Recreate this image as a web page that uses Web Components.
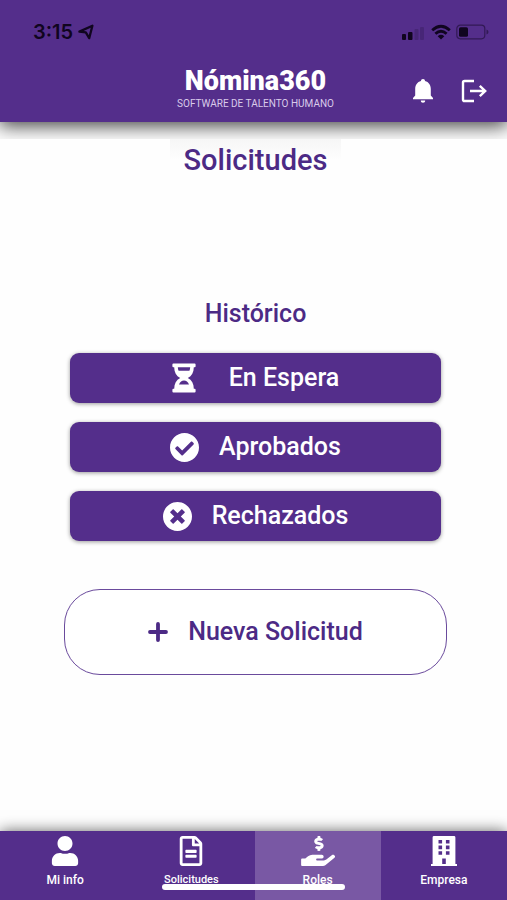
<!DOCTYPE html>
<html lang="es">
<head>
<meta charset="utf-8">
<meta name="viewport" content="width=device-width, initial-scale=1">
<title>Nómina360 – Solicitudes</title>
<style>
  body { margin: 0; font-family: Roboto, "Liberation Sans", sans-serif; background: #fefefe; --brand: #542e8b; }
</style>
</head>
<body>
<nomina-app></nomina-app>
<script>
const ICONS = {
  location: ['0 0 16 16', '<path d="M1.400 7.600 14.400 1.800 11.200 14.200 7.800 8.400Z" fill="none" stroke="currentColor" stroke-width="2.300" stroke-linejoin="round"/>'],
  signal: ['0 0 24 16', '<rect x="0" y="10" width="4" height="6" rx="1"/><rect x="6" y="8" width="4.500" height="8" rx="1"/><g opacity=".18"><rect x="12.500" y="5" width="4" height="11" rx="1"/><rect x="18" y="3" width="4" height="13" rx="1"/></g>'],
  wifi: ['0 0 20 16', '<g fill="none" stroke="currentColor" stroke-width="2.8"><path d="M1.2 6.2Q10-1.8 18.8 6.2"/><path d="M4.4 9.8Q10 4.6 15.6 9.8"/></g><path d="M6.7 12.2Q10 9.5 13.3 12.2L10 15.6Z"/>'],
  battery: ['0 0 33 16', '<rect x=".8" y="1.2" width="28" height="13.6" rx="3.5" fill="none" stroke="currentColor" stroke-width="1.2" opacity=".5"/><rect x="3" y="3.2" width="9" height="9.6" rx="1.6"/><path d="M30.5 5.5q2 .7 2 2.5t-2 2.5z" opacity=".5"/>'],
  bell: ['0 0 22 26', '<path d="M11 1c1.3 0 2 .8 2 2 3.8 1 5.8 4 5.8 8v6.6l2.2 2.3v1.3H1v-1.3l2.2-2.3V11c0-4 2-7 5.8-8 0-1.2.7-2 2-2zM8.8 22.6h4.4c0 1.4-.9 2.2-2.2 2.2s-2.2-.8-2.2-2.2z"/>'],
  logout: ['0 0 26 24', '<path d="M13 2H3.6Q2 2 2 3.6v16.8Q2 22 3.6 22H13M9 12h15M18.8 6.8 24.2 12l-5.4 5.2" fill="none" stroke="currentColor" stroke-width="2.4"/>'],
  hourglass: ['0 0 24 30', '<path fill-rule="evenodd" d="M1.4.4h21.2q1 0 1 1v1.8q0 1-1 1h-.8c0 5-2 8.700-6 10.800 4 2.100 6 5.800 6 10.800h.8q1 0 1 1v1.800q0 1-1 1H1.400q-1 0-1-1v-1.800q0-1 1-1h.8c0-5 2-8.700 6-10.800-4-2.100-6-5.800-6-10.800h-.8q-1 0-1-1V1.400q0-1 1-1zM5.800 4.200q.1 2 .8 3.600h10.800q.7-1.600.8-3.600zM7 21.600h10c-1-2.700-2.800-4-5-4s-4 1.300-5 4z"/>'],
  check: ['8 8 496 496', '<path d="M504 256c0 136.967-111.033 248-248 248S8 392.967 8 256 119.033 8 256 8s248 111.033 248 248zM227.314 387.314l184-184c6.248-6.248 6.248-16.379 0-22.627l-22.627-22.627c-6.248-6.249-16.379-6.249-22.628 0L216 308.118l-70.059-70.059c-6.248-6.248-16.379-6.248-22.628 0l-22.627 22.627c-6.248 6.248-6.248 16.379 0 22.627l104 104c6.249 6.249 16.379 6.249 22.628.001z"/>'],
  cross: ['8 8 496 496', '<path d="M256 8C119 8 8 119 8 256s111 248 248 248 248-111 248-248S393 8 256 8zm121.600 313.100c4.700 4.700 4.700 12.300 0 17L338 377.600c-4.700 4.700-12.300 4.700-17 0L256 312l-65.100 65.600c-4.700 4.700-12.300 4.700-17 0L134.400 338c-4.700-4.700-4.700-12.300 0-17l65.600-65-65.600-65.100c-4.700-4.700-4.700-12.300 0-17l39.600-39.600c4.700-4.700 12.300-4.700 17 0l65 65.700 65.100-65.600c4.700-4.700 12.300-4.700 17 0l39.600 39.600c4.700 4.700 4.700 12.300 0 17L312 256l65.600 65.100z"/>'],
  plus: ['0 0 20 20', '<path d="M10 2v16M2 10h16" fill="none" stroke="currentColor" stroke-width="3.800" stroke-linecap="round"/>'],
  user: ['0 0 448 512', '<path d="M224 256c70.700 0 128-57.300 128-128S294.700 0 224 0 96 57.300 96 128s57.300 128 128 128zm89.600 32h-16.700c-22.200 10.200-46.900 16-72.900 16s-50.600-5.800-72.900-16h-16.700C60.200 288 0 348.200 0 422.400V464c0 26.500 21.500 48 48 48h352c26.500 0 48-21.500 48-48v-41.600c0-74.200-60.200-134.400-134.400-134.400z"/>'],
  file: ['0 0 384 512', '<path d="M288 248v28c0 6.600-5.400 12-12 12H108c-6.600 0-12-5.400-12-12v-28c0-6.600 5.400-12 12-12h168c6.600 0 12 5.400 12 12zm-12 72H108c-6.600 0-12 5.400-12 12v28c0 6.600 5.400 12 12 12h168c6.600 0 12-5.400 12-12v-28c0-6.600-5.400-12-12-12zm108-188.100V464c0 26.500-21.500 48-48 48H48c-26.500 0-48-21.500-48-48V48C0 21.500 21.500 0 48 0h204.100C264.800 0 277 5.100 286 14.100L369.900 98c9 8.900 14.100 21.200 14.100 33.900zm-128-80V128h76.100L256 51.900zM336 464V176H232c-13.300 0-24-10.700-24-24V48H48v416h288z"/>'],
  hand: ['0 0 576 512', '<path d="M271.06,144.3l54.27,14.3a8.59,8.59,0,0,1,6.63,8.1c0,4.6-4.09,8.4-9.12,8.4h-35.6a30,30,0,0,1-11.19-2.2c-5.24-2.2-11.28-1.7-15.3,2l-19,17.5a11.68,11.68,0,0,0-2.25,2.66,11.42,11.42,0,0,0,3.88,15.74,83.77,83.77,0,0,0,34.51,11.5V240c0,8.8,7.83,16,17.37,16h17.37c9.55,0,17.38-7.2,17.38-16V222.4c32.93-3.6,57.84-31,53.5-63-3.15-23-22.46-41.3-46.56-47.7L282.68,97.4a8.59,8.59,0,0,1-6.63-8.1c0-4.6,4.09-8.4,9.12-8.4h35.6A30,30,0,0,1,332,83.1c5.23,2.2,11.28,1.7,15.3-2l19-17.5A11.31,11.31,0,0,0,368.47,61a11.43,11.43,0,0,0-3.84-15.78,83.82,83.82,0,0,0-34.52-11.5V16c0-8.8-7.82-16-17.37-16H295.37C285.82,0,278,7.2,278,16V33.6c-32.89,3.6-57.85,31-53.51,63C227.63,119.6,247,137.9,271.06,144.3ZM565.27,328.1c-11.8-10.7-30.2-10-42.6,0L430.27,402a63.64,63.64,0,0,1-40,14H272a16,16,0,0,1,0-32h78.29c15.9,0,30.71-10.9,33.25-26.6a31.2,31.2,0,0,0,.46-5.46A32,32,0,0,0,352,320H192a117.66,117.66,0,0,0-74.1,26.29L71.4,384H16A16,16,0,0,0,0,400v96a16,16,0,0,0,16,16H372.77a64,64,0,0,0,40-14L564,377a32,32,0,0,0,1.28-48.9Z"/>'],
  building: ['0 0 26 30', '<path fill-rule="evenodd" d="M3 0h20q1.400 0 1.400 1.400V28H26v2H0v-2h1.600V1.400Q1.600 0 3 0zM7.500 4v3.600h3.600V4zm7.400 0v3.600h3.600V4zm-7.400 5.600v3.600h3.600V9.600zm7.400 0v3.600h3.600V9.600zm-7.400 5.600v3.600h3.600v-3.600zm7.400 0v3.600h3.600v-3.600zM11.200 22.400V28h3.600v-5.600z"/>']
};

class BaseElement extends HTMLElement {
  constructor() {
    super();
    this.attachShadow({ mode: 'open' });
  }
  connectedCallback() { this.shadowRoot.innerHTML = this.view(); }
}

customElements.define('app-icon', class extends BaseElement {
  view() {
    const [box, shapes] = ICONS[this.getAttribute('name')];
    return `<style>:host{display:block;flex:none}svg{display:block;width:100%;height:100%}</style>
      <svg viewBox="${box}" fill="currentColor" aria-hidden="true">${shapes}</svg>`;
  }
});

customElements.define('status-bar', class extends BaseElement {
  view() {
    return `<style>
      :host{display:flex;justify-content:space-between;align-items:center;height:64px;padding:0 18px 0 33px;color:#10051f;box-sizing:border-box}
      div{display:flex;align-items:center;gap:5px}
      time{font:600 20px/24px Inter,Roboto,sans-serif}
      .loc{width:16px;height:16px}.signal{width:24px;height:16px}.wifi{width:20px;height:16px}.battery{width:33px;height:16px}
    </style>
    <div><time>3:15</time><app-icon class="loc" name="location"></app-icon></div>
    <div><app-icon class="signal" name="signal"></app-icon><app-icon class="wifi" name="wifi"></app-icon><app-icon class="battery" name="battery"></app-icon></div>`;
  }
});

customElements.define('app-header', class extends BaseElement {
  view() {
    return `<style>
      :host{display:block;overflow:hidden;padding-bottom:17px}
      header{background:var(--brand);box-shadow:0 3px 18px 1px rgba(0,0,0,.75)}
      .bar{display:grid;grid-template-columns:1fr auto 1fr;align-items:center;padding:0 20px 12px 24px}
      .brand{grid-column:2;text-align:center;color:#fff}
      strong{display:block;font-size:27px;line-height:34px;font-weight:900}
      small{display:block;font-size:10px;line-height:12px;color:#d9cbea}
      .actions{display:flex;justify-content:flex-end;gap:27px;padding-top:8px}
      button{border:0;padding:0;background:none;color:#fff;display:flex;align-items:center}
      .bell{width:22px;height:26px}.out{width:26px;height:24px}
    </style>
    <header><status-bar></status-bar>
      <div class="bar">
        <div class="brand"><strong>Nómina360</strong><small>SOFTWARE DE TALENTO HUMANO</small></div>
        <div class="actions">
          <button type="button" aria-label="Notificaciones"><app-icon class="bell" name="bell"></app-icon></button>
          <button type="button" aria-label="Cerrar sesión"><app-icon class="out" name="logout"></app-icon></button>
        </div>
      </div>
    </header>`;
  }
});

customElements.define('action-button', class extends BaseElement {
  view() {
    return `<style>
      :host{display:block}
      button{display:flex;align-items:center;justify-content:center;gap:20px;width:100%;height:50px;padding:0;border:0;border-radius:9px;
        background:var(--brand);color:#fff;font:500 25px/32px Roboto,sans-serif;box-shadow:0 1px 4px rgba(0,0,0,.4)}
      app-icon{width:29px;height:29px}
      :host([icon="hourglass"]) button{gap:33px}
      :host([icon="hourglass"]) app-icon{width:24px;height:30px}
      :host([outline]) button{height:86px;border:1px solid #6a4a9c;border-radius:36px;background:#fff;color:#4c2a85;box-shadow:none}
      :host([outline]) app-icon{width:20px;height:20px}
    </style>
    <button type="button"><app-icon name="${this.getAttribute('icon')}"></app-icon><slot></slot></button>`;
  }
});

customElements.define('tab-item', class extends BaseElement {
  view() {
    return `<style>
      :host{display:block;flex:1 1 0}
      a{display:flex;flex-direction:column;align-items:center;gap:5px;height:100%;padding-top:5px;box-sizing:border-box;color:#fff;text-decoration:none;font-size:12px;line-height:18px;font-weight:500}
      :host([active]) a{background:#7958a4}
      :host([small]) a{font-size:11px}
      app-icon{width:34px;height:30px}
    </style>
    <a href="#${this.getAttribute('icon')}"><app-icon name="${this.getAttribute('icon')}"></app-icon><slot></slot></a>`;
  }
});

customElements.define('tab-bar', class extends BaseElement {
  view() {
    return `<style>
      :host{display:block;position:relative}
      nav{display:flex;height:69px;padding-left:2px;background:var(--brand);box-shadow:0 0 14px rgba(0,0,0,.6)}
      .home{position:absolute;left:0;right:0;bottom:10px;width:36%;height:6px;margin:0 auto;border-radius:3px;background:#fff}
    </style>
    <nav aria-label="Principal"><slot></slot></nav><div class="home"></div>`;
  }
});

customElements.define('nomina-app', class extends BaseElement {
  view() {
    return `<style>
      :host{display:flex;flex-direction:column;min-height:100vh}
      main{flex:1;display:flex;flex-direction:column;padding:0 60px 40px 64px;color:#4c2a85}
      h1{align-self:center;margin:0;padding:0 14px;font-size:29px;line-height:42px;font-weight:500;background:linear-gradient(#f6f6f6,#fefefe 50%)}
      h2{margin:116px 0 22px;text-align:center;font-size:25px;line-height:34px;font-weight:500}
      .list{display:flex;flex-direction:column;gap:19px;padding:0 6px;margin-bottom:48px}
    </style>
    <app-header></app-header>
    <main>
      <h1>Solicitudes</h1>
      <h2>Histórico</h2>
      <div class="list">
        <action-button icon="hourglass">En Espera</action-button>
        <action-button icon="check">Aprobados</action-button>
        <action-button icon="cross">Rechazados</action-button>
      </div>
      <action-button icon="plus" outline>Nueva Solicitud</action-button>
    </main>
    <tab-bar>
      <tab-item icon="user">Mi info</tab-item>
      <tab-item icon="file" small>Solicitudes</tab-item>
      <tab-item icon="hand" active>Roles</tab-item>
      <tab-item icon="building">Empresa</tab-item>
    </tab-bar>`;
  }
});
</script>
</body>
</html>
